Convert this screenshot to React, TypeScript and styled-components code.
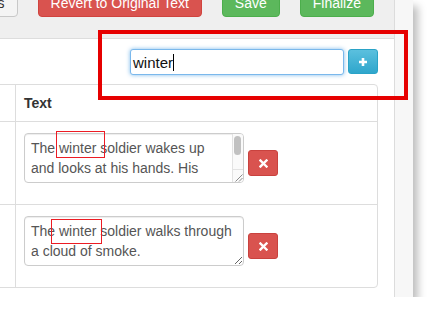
import React from 'react';
import styled, { createGlobalStyle, css } from 'styled-components';

const GlobalStyle = createGlobalStyle`
  html, body { margin: 0; padding: 0; background: #ffffff; }
  body {
    font-family: "Liberation Sans", Arial, Helvetica, sans-serif;
    font-size: 14px;
    color: #333333;
  }
  *, *::before, *::after { box-sizing: border-box; }
`;

const Window = styled.div`
  position: relative;
  width: 413px;
  height: 297px;
  display: flex;
  background: #ffffff;
  box-shadow: 5px 6px 8px rgba(0, 0, 0, 0.26);
`;

const Main = styled.div`
  flex: 1;
  min-width: 0;
  display: flex;
  flex-direction: column;
  overflow: hidden;
`;

const Toolbar = styled.div`
  flex: 0 0 39px;
  display: flex;
  justify-content: flex-end;
  align-items: flex-end;
  gap: 20px;
  padding: 0 20px 21px 0;
  background: #efefef;
  border-bottom: 1px solid #dddddd;
  overflow: hidden;
`;

type Variant = 'default' | 'danger' | 'success';

const variants = {
  default: css`
    background: #f4f4f4;
    border-color: #c8c8c8;
    color: #333333;
  `,
  danger: css`
    background: #d9534f;
    border-color: #d0433e;
    color: #ffffff;
  `,
  success: css`
    background: #5cb85c;
    border-color: #4cae4c;
    color: #ffffff;
  `,
};

const TopButton = styled.button<{ $variant: Variant }>`
  flex-shrink: 0;
  padding: 6px 12px 3px;
  border: 1px solid;
  border-radius: 4px;
  font-family: inherit;
  font-size: 14px;
  line-height: 20px;
  white-space: nowrap;
  ${(p) => variants[p.$variant]}
`;

const Panel = styled.div`
  flex: 1;
  display: flex;
  flex-direction: column;
  padding: 10px 16px 0 0;
  background: #ffffff;
`;

const SearchRow = styled.div`
  display: flex;
  justify-content: flex-end;
  align-items: flex-start;
  gap: 4px;
  margin-bottom: 9px;
`;

const SearchField = styled.div`
  width: 214px;
  height: 26px;
  display: flex;
  align-items: center;
  padding: 0 2px;
  border: 1px solid #7ab8ec;
  border-radius: 3px;
  box-shadow: 0 0 4px rgba(102, 175, 233, 0.85);
  background: #ffffff;
  font-size: 15px;
  color: #111111;
`;

const Caret = styled.span`
  display: inline-block;
  width: 1px;
  height: 17px;
  background: #000000;
`;

const AddButton = styled.button`
  width: 30px;
  height: 25px;
  padding: 0;
  display: flex;
  align-items: center;
  justify-content: center;
  border: 1px solid #2aa3c7;
  border-radius: 3px;
  background: linear-gradient(to bottom, #5bc0de 0%, #2fa6cc 100%);
`;

const Grid = styled.table`
  table-layout: fixed;
  border-collapse: separate;
  border-spacing: 0;
  margin-left: -30px;
  width: calc(100% + 30px);
  border: 1px solid #dddddd;
  border-radius: 0 4px 4px 0;
`;

const Col = styled.col<{ $width?: number }>`
  width: ${(p) => (p.$width ? `${p.$width}px` : 'auto')};
`;

const HeadCell = styled.th<{ $first?: boolean }>`
  padding: 8px;
  line-height: 20px;
  font-weight: bold;
  text-align: left;
  color: #333333;
  border-left: ${(p) => (p.$first ? 'none' : '1px solid #dddddd')};
`;

const BodyCell = styled.td<{ $first?: boolean }>`
  padding: 11px 8px 21px;
  vertical-align: top;
  border-top: 1px solid #dddddd;
  border-left: ${(p) => (p.$first ? 'none' : '1px solid #dddddd')};
`;

const EditRow = styled.div`
  display: flex;
  align-items: flex-start;
  gap: 4px;
`;

const TextWrap = styled.div`
  position: relative;
`;

const TextArea = styled.textarea<{ $scroll?: boolean }>`
  display: block;
  width: 220px;
  height: 50px;
  margin: 0;
  padding: ${(p) => (p.$scroll ? '4px 17px 4px 6px' : '4px 6px')};
  border: 1px solid #cccccc;
  border-radius: 4px;
  box-shadow: inset 0 1px 1px rgba(0, 0, 0, 0.075);
  font-family: "Liberation Sans", Arial, Helvetica, sans-serif;
  font-size: 14px;
  line-height: 20px;
  color: #555555;
  resize: both;
  overflow: hidden;
  outline: none;
`;

const ScrollBar = styled.div`
  position: absolute;
  top: 1px;
  right: 1px;
  bottom: 1px;
  width: 11px;
  display: flex;
  flex-direction: column;
  background: #fafafa;
  border-left: 1px solid #e3e3e3;
  border-radius: 0 3px 3px 0;
  pointer-events: none;
`;

const Thumb = styled.div`
  height: 19px;
  margin: 2px 2px 0 1px;
  border-radius: 4px;
  background: #c1c1c1;
`;

const TrackFill = styled.div`
  flex: 1;
`;

const Corner = styled.div`
  height: 13px;
  display: flex;
  align-items: flex-end;
  justify-content: flex-end;
  border-top: 1px solid #e3e3e3;
`;

const MarkSvg = styled.svg<{ $left: number; $top: number }>`
  position: absolute;
  z-index: 3;
  left: ${(p) => p.$left}px;
  top: ${(p) => p.$top}px;
  overflow: visible;
  pointer-events: none;
`;

const DeleteButton = styled.button`
  width: 30px;
  height: 26px;
  margin-top: 17px;
  padding: 0;
  display: flex;
  align-items: center;
  justify-content: center;
  border: 1px solid #c9423e;
  border-radius: 3px;
  background: #d9534f;
`;

const Callout = styled.div`
  position: absolute;
  left: 98px;
  top: 30px;
  width: 310px;
  height: 70px;
  border: 4px solid #e60000;
  pointer-events: none;
`;

const ScrollTrack = styled.div`
  flex: 0 0 19px;
  background: #f7f7f7;
  border-left: 1px solid #dcdcdc;
`;

const PlusIcon = () => (
  <svg width="10" height="10" viewBox="0 0 10 10">
    <path d="M5 1v8M1 5h8" stroke="#ffffff" strokeWidth="2.6" />
  </svg>
);

const CrossIcon = () => (
  <svg width="9" height="9" viewBox="0 0 9 9">
    <path d="M1.5 1.5l6 6M7.5 1.5l-6 6" stroke="#ffffff" strokeWidth="2.4" strokeLinecap="square" />
  </svg>
);

const GripIcon = () => (
  <svg width="10" height="10" viewBox="0 0 10 10">
    <path d="M2.5 9.5l7-7M6 9.5l3.5-3.5" stroke="#8c8c8c" strokeWidth="1" />
  </svg>
);

const WordMark = ({ left, top, width, height }: { left: number; top: number; width: number; height: number }) => (
  <MarkSvg $left={left} $top={top} width={width} height={height} viewBox={`0 0 ${width} ${height}`}>
    <rect x="0.5" y="0.5" width={width - 1} height={height - 1} fill="none" stroke="#ec1c24" strokeWidth="1" />
  </MarkSvg>
);

const rows = [
  {
    text: 'The winter soldier wakes up and looks at his hands. His fingers are stiff.',
    scroll: true,
    mark: { left: 32, top: -2, width: 49, height: 27 },
  },
  {
    text: 'The winter soldier walks through a cloud of smoke.',
    scroll: false,
    mark: { left: 27, top: 3, width: 51, height: 25 },
  },
];

export default function App() {
  return (
    <>
      <GlobalStyle />
      <Window>
        <Main>
          <Toolbar>
            <TopButton $variant="default">Show Options</TopButton>
            <TopButton $variant="danger">Revert to Original Text</TopButton>
            <TopButton $variant="success">Save</TopButton>
            <TopButton $variant="success">Finalize</TopButton>
          </Toolbar>
          <Panel>
            <SearchRow>
              <SearchField>
                winter
                <Caret />
              </SearchField>
              <AddButton aria-label="Add">
                <PlusIcon />
              </AddButton>
            </SearchRow>
            <Grid>
              <colgroup>
                <Col $width={44} />
                <Col />
              </colgroup>
              <thead>
                <tr>
                  <HeadCell $first />
                  <HeadCell>Text</HeadCell>
                </tr>
              </thead>
              <tbody>
                {rows.map((row, i) => (
                  <tr key={i}>
                    <BodyCell $first />
                    <BodyCell>
                      <EditRow>
                        <TextWrap>
                          <TextArea $scroll={row.scroll} defaultValue={row.text} />
                          {row.scroll && (
                            <ScrollBar>
                              <Thumb />
                              <TrackFill />
                              <Corner>
                                <GripIcon />
                              </Corner>
                            </ScrollBar>
                          )}
                          <WordMark {...row.mark} />
                        </TextWrap>
                        <DeleteButton aria-label="Remove">
                          <CrossIcon />
                        </DeleteButton>
                      </EditRow>
                    </BodyCell>
                  </tr>
                ))}
              </tbody>
            </Grid>
          </Panel>
        </Main>
        <ScrollTrack />
        <Callout />
      </Window>
    </>
  );
}
